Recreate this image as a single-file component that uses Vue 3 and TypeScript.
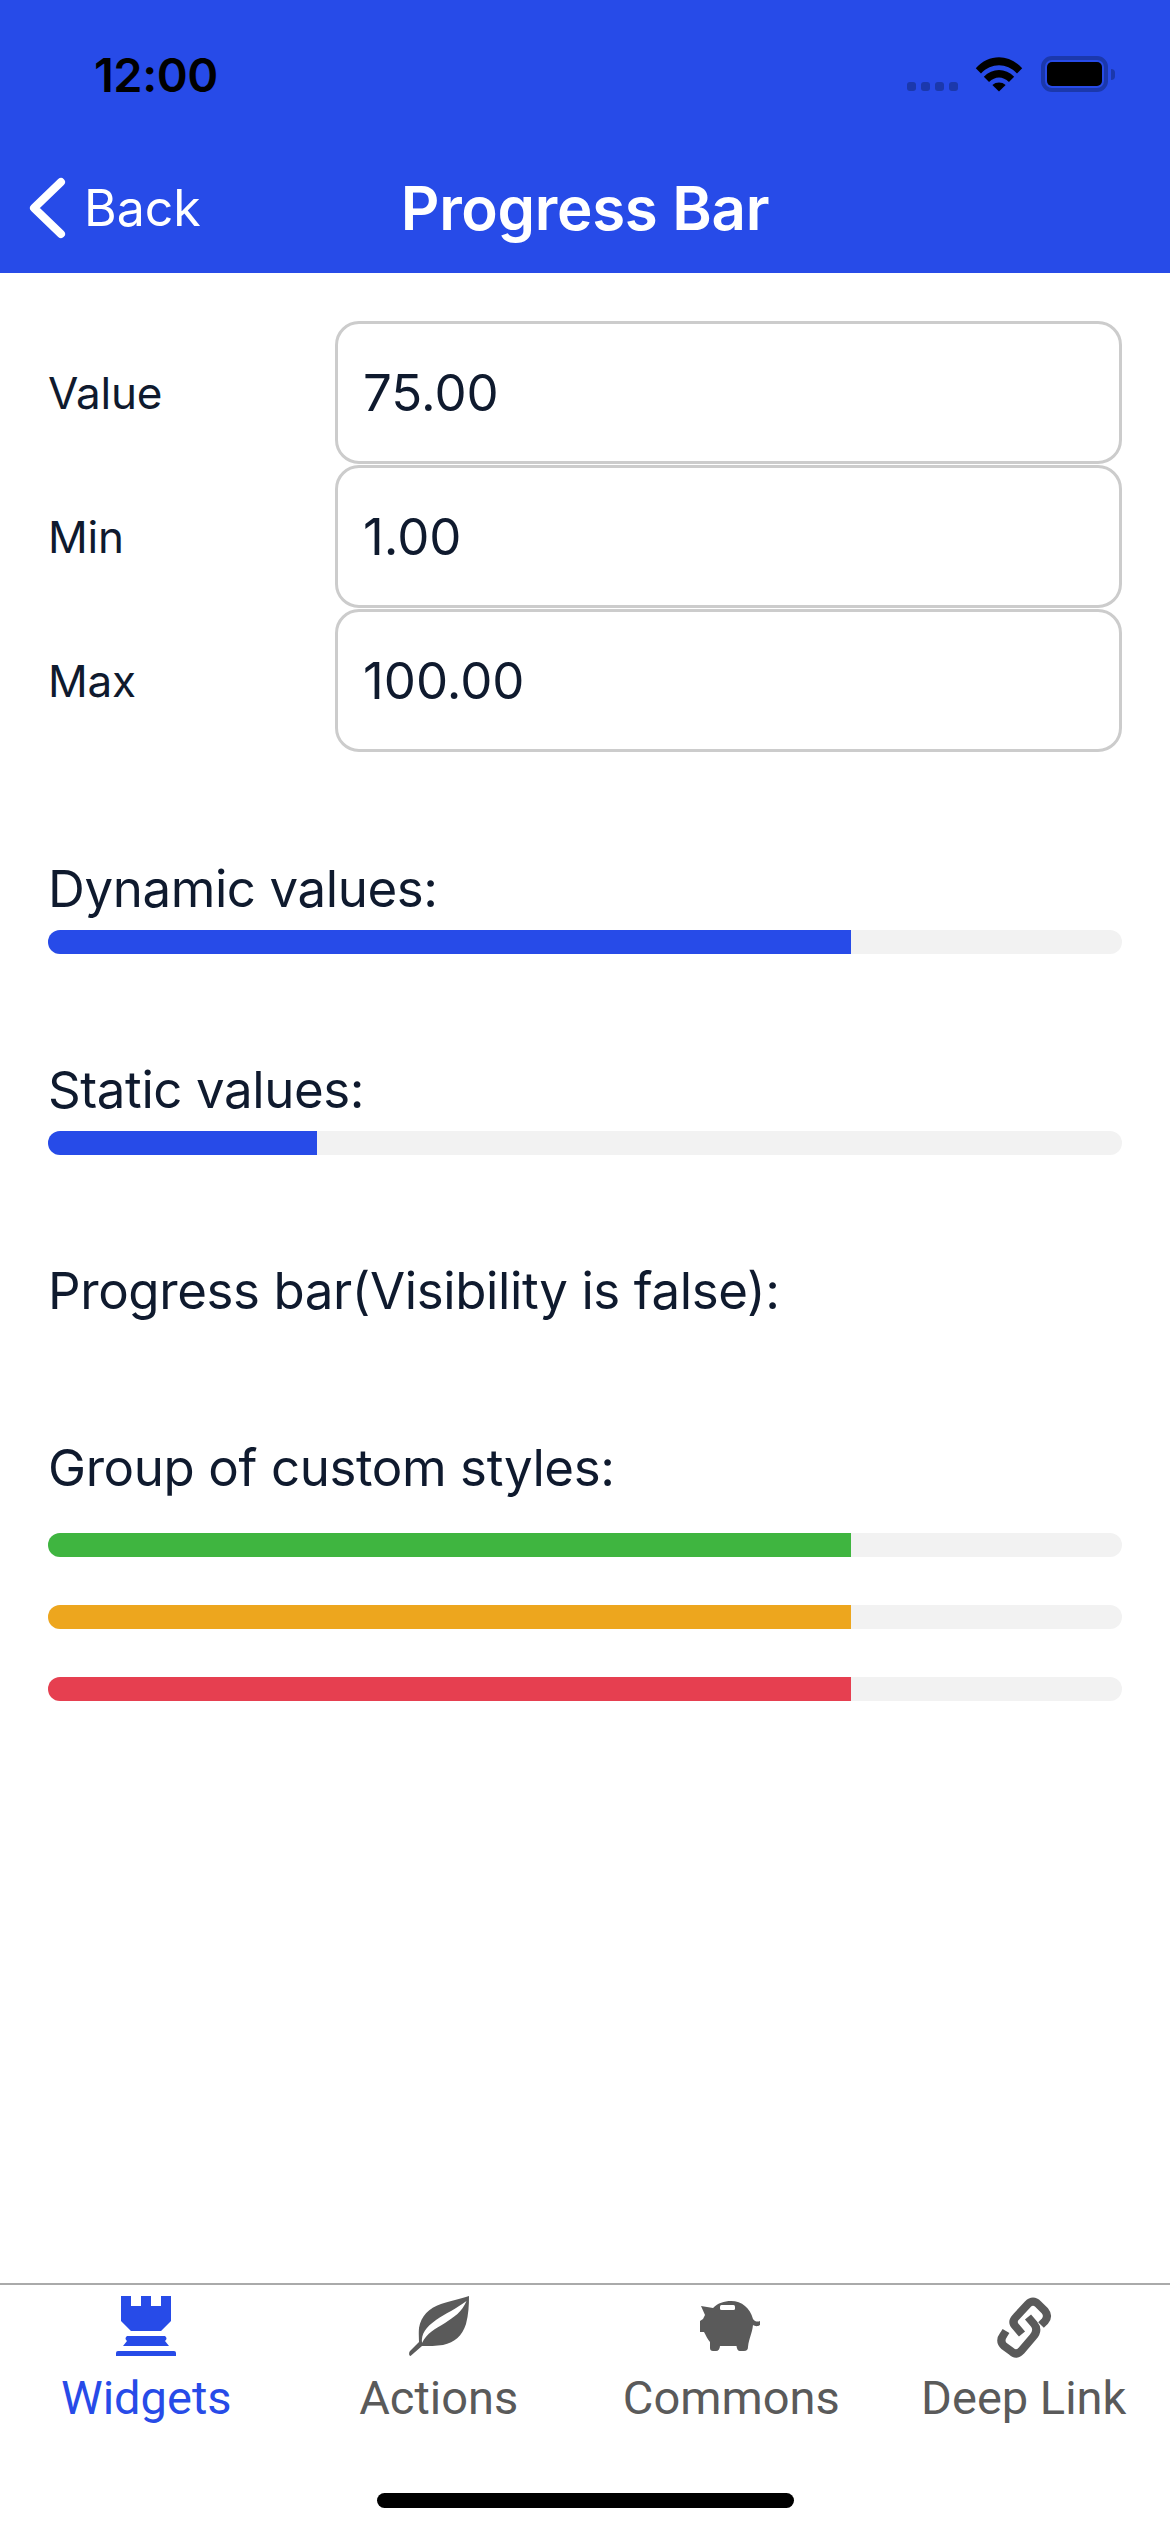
<script setup lang="ts">
const fields = [
  { label: 'Value', value: '75.00' },
  { label: 'Min', value: '1.00' },
  { label: 'Max', value: '100.00' },
]
const customBars = ['#3fb540', '#eda61e', '#e63f50']
const pct = (75 - 1) / 99 * 100
</script>

<template>
  <div class="screen">
    <header class="header">
      <div class="status">
        <span class="time">12:00</span>
        <div class="status-icons">
          <div class="dots"><i></i><i></i><i></i><i></i></div>
          <svg class="wifi" width="48" height="36" viewBox="0 0 50 38">
            <path d="M0.5 13 C14 -2.500 36 -2.500 49.500 13 L44 18.500 C33 7 17 7 6 18.500Z" fill="#000" />
            <path d="M9 22 C18 12.500 32 12.500 41 22 L35.500 27.500 C29 21 21 21 14.500 27.500Z" fill="#000" />
            <path d="M18 30.500 C22 27 28 27 32 30.500 L25 37.500Z" fill="#000" />
          </svg>
          <div class="battery"><div class="cell"></div></div>
          <div class="nub"></div>
        </div>
      </div>
      <div class="nav">
        <div class="back">
          <svg width="38" height="62" viewBox="0 0 38 62">
            <path d="M33 5 L6 31 L33 57" fill="none" stroke="#fff" stroke-width="8" stroke-linecap="round" stroke-linejoin="round" />
          </svg>
          <span>Back</span>
        </div>
        <h1 class="title">Progress Bar</h1>
        <div></div>
      </div>
    </header>

    <main class="content">
      <section class="form">
        <div v-for="f in fields" :key="f.label" class="row">
          <span class="label">{{ f.label }}</span>
          <div class="input">{{ f.value }}</div>
        </div>
      </section>

      <section class="group">
        <p class="heading">Dynamic values:</p>
        <div class="track"><div class="fill blue" :style="{ width: pct + '%' }"></div></div>
      </section>

      <section class="group">
        <p class="heading">Static values:</p>
        <div class="track"><div class="fill blue" :style="{ width: '25%' }"></div></div>
      </section>

      <section class="group">
        <p class="heading">Progress bar(Visibility is false):</p>
      </section>

      <section class="group">
        <p class="heading">Group of custom styles:</p>
        <div class="stack">
          <div v-for="c in customBars" :key="c" class="track">
            <div class="fill" :style="{ width: pct + '%', background: c }"></div>
          </div>
        </div>
      </section>
    </main>

    <footer class="tabs">
      <div class="tab active">
        <svg width="60" height="62" viewBox="0 0 60 62">
          <g fill="#274be8">
            <path d="M5 0 H15 V10 H25 V0 H35 V10 H45 V0 H55 V25 L45 35 H15 L5 25Z" />
            <path d="M11 40 H49 Q52 42.500 49 45 L53 50 H7 L11 45 Q8 42.500 11 40Z" />
            <path d="M2 55 H58 Q60 55 60 57 V60 H0 V57 Q0 55 2 55Z" />
          </g>
        </svg>
        <span>Widgets</span>
      </div>
      <div class="tab">
        <svg width="60" height="62" viewBox="0 0 60 62">
          <path fill="#5a5a5a" d="M60 0 C52 3 40 5 32 8 C20 12 12 20 10 32 C9.500 38 10 42 10 46 L1 55 C-0.500 57 0 60 1.500 60 L13 50 C20 50 27 50 34 49 C46 46 53 40 57 28 C59.500 19 60 9 60 0Z" />
          <path fill="#fff" d="M57.500 5 C53 16 45 21 36 27 C26 33 18 37 13 47 C12 38 17 31 27 24 C37 17 47 13 57.500 5Z" />
        </svg>
        <span>Actions</span>
      </div>
      <div class="tab">
        <svg width="62" height="62" viewBox="0 0 62 62">
          <path fill="#5a5a5a" d="M1 10 L13 12 C18 7 24 5 31 5 C42 5 50 12 53 23 C55 26 58 26 60 25 V29 C57 31 55 30 53 29 C52 38 49 42 48 51 Q48 55 44 55 H40 Q37 55 36.500 50 H20 Q19.500 55 16 55 H13 Q10 55 10 52 V46 C7 43 6 39 4 36 H0 V25 L3 23 L5 19Z" />
          <rect x="20" y="9" width="15" height="5" rx="1.500" fill="#fff" />
        </svg>
        <span>Commons</span>
      </div>
      <div class="tab">
        <svg width="56" height="62" viewBox="0 0 56 62">
          <g fill="none" stroke="#5a5a5a" stroke-width="8">
            <path d="M45 29 L49 25 Q53 20 49 15 L42 8 Q37 3 32 8 L20 21 Q15 26 20 31 L26 38" />
            <path d="M10 35 L7.500 39 Q3 45 8 50 L15 55 Q20 60 25 55 L37 41 Q43 34 38 28 L32 21" />
          </g>
        </svg>
        <span>Deep Link</span>
      </div>
    </footer>
    <div class="home"><div class="indicator"></div></div>
  </div>
</template>

<style scoped>
.screen {
  width: 1170px;
  height: 2532px;
  display: flex;
  flex-direction: column;
  background: #fff;
  font-family: Inter, "Noto Sans", sans-serif;
  color: #0f1a2e;
  overflow: hidden;
}
.header {
  height: 273px;
  flex: none;
  background: #274be8;
  color: #fff;
}
.status {
  height: 132px;
  display: flex;
  align-items: center;
  justify-content: space-between;
  padding: 16px 55px 0 94px;
  box-sizing: border-box;
}
.time {
  font-size: 47px;
  font-weight: 600;
  letter-spacing: -0.5px;
  color: #000;
}
.status-icons {
  display: flex;
  align-items: center;
  height: 36px;
}
.dots {
  display: flex;
  gap: 5px;
  align-self: flex-end;
  margin: 0 17px 1px 0;
}
.dots i {
  width: 9px;
  height: 9px;
  border-radius: 3px;
  background: #1b38ac;
}
.wifi {
  margin-right: 18px;
}
.battery {
  width: 67px;
  height: 36px;
  box-sizing: border-box;
  border: 4px solid #1b38ac;
  border-radius: 11px;
  padding: 2px;
}
.cell {
  width: 100%;
  height: 100%;
  background: #000;
  border-radius: 5px;
}
.nub {
  width: 4px;
  height: 11px;
  margin-left: 3px;
  background: #1b38ac;
  border-radius: 0 6px 6px 0;
}
.nav {
  height: 141px;
  box-sizing: border-box;
  padding: 11px 0 0 28px;
  margin-right: 28px;
  display: grid;
  grid-template-columns: 1fr auto 1fr;
  align-items: center;
}
.back {
  display: flex;
  align-items: center;
  gap: 18px;
  font-size: 50px;
  font-weight: 400;
}
.title {
  margin: 0;
  font-size: 60px;
  font-weight: 600;
  line-height: 68px;
  letter-spacing: -0.3px;
}
.content {
  flex: 1;
  padding: 48px 48px 0;
  display: flex;
  flex-direction: column;
}
.form {
  display: flex;
  flex-direction: column;
  gap: 1px;
  margin-bottom: 105px;
}
.row {
  display: flex;
  align-items: center;
}
.label {
  width: 287px;
  font-size: 44px;
  letter-spacing: -0.2px;
}
.input {
  flex: 1;
  height: 143px;
  box-sizing: border-box;
  border: 3px solid #ccc;
  border-radius: 24px;
  padding: 0 25px;
  display: flex;
  align-items: center;
  font-size: 51px;
}
.group {
  display: flex;
  flex-direction: column;
}
.group + .group {
  margin-top: 104px;
}
.heading {
  margin: 0;
  font-size: 51px;
  line-height: 64px;
  padding-bottom: 9px;
  letter-spacing: -0.4px;
}
.track {
  height: 24px;
  background: #f2f2f2;
  border-radius: 12px;
  overflow: hidden;
}
.fill {
  height: 100%;
}
.blue {
  background: #274be8;
}
.stack {
  display: flex;
  flex-direction: column;
  gap: 48px;
  margin-top: 24px;
}
.tabs {
  flex: none;
  height: 175px;
  box-sizing: border-box;
  border-top: 2px solid #aaa;
  display: grid;
  grid-template-columns: repeat(4, 1fr);
  padding: 11px 0 0;
}
.tab {
  display: flex;
  flex-direction: column;
  align-items: center;
  font-family: Roboto, sans-serif;
  font-size: 47px;
  font-weight: 400;
  line-height: 56px;
  color: #5a5a5a;
  gap: 12px;
}
.tab.active {
  color: #274be8;
}
.tab svg {
  display: block;
}
.home {
  flex: none;
  height: 74px;
  display: flex;
  justify-content: center;
  padding-top: 35px;
  box-sizing: border-box;
}
.indicator {
  width: 417px;
  height: 15px;
  background: #000;
  border-radius: 8px;
}
</style>
